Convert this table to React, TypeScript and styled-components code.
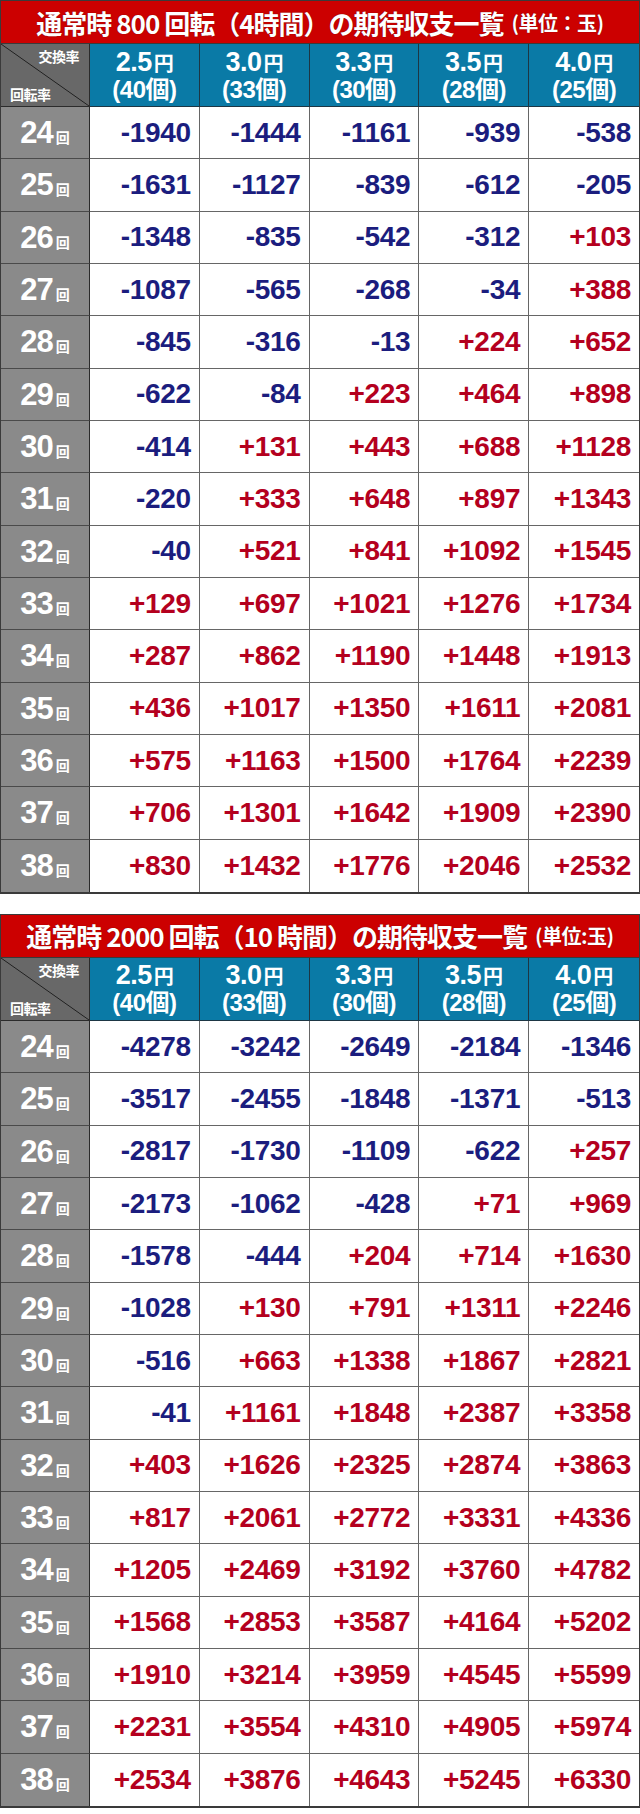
import styled, { createGlobalStyle } from 'styled-components';

const GlobalStyle = createGlobalStyle`
  html, body {
    margin: 0;
    padding: 0;
    background: #fff;
  }
  body {
    font-family: "Liberation Sans", "Noto Sans CJK JP", sans-serif;
  }
`;

type Table = {
  title: string;
  unit: string;
  values: number[][];
};

const rates = [
  { yen: '2.5', count: '40' },
  { yen: '3.0', count: '33' },
  { yen: '3.3', count: '30' },
  { yen: '3.5', count: '28' },
  { yen: '4.0', count: '25' },
];

const spins = [24, 25, 26, 27, 28, 29, 30, 31, 32, 33, 34, 35, 36, 37, 38];

const tables: Table[] = [
  {
    title: '通常時 800 回転（4時間）の期待収支一覧',
    unit: '(単位：玉)',
    values: [
      [-1940, -1444, -1161, -939, -538],
      [-1631, -1127, -839, -612, -205],
      [-1348, -835, -542, -312, 103],
      [-1087, -565, -268, -34, 388],
      [-845, -316, -13, 224, 652],
      [-622, -84, 223, 464, 898],
      [-414, 131, 443, 688, 1128],
      [-220, 333, 648, 897, 1343],
      [-40, 521, 841, 1092, 1545],
      [129, 697, 1021, 1276, 1734],
      [287, 862, 1190, 1448, 1913],
      [436, 1017, 1350, 1611, 2081],
      [575, 1163, 1500, 1764, 2239],
      [706, 1301, 1642, 1909, 2390],
      [830, 1432, 1776, 2046, 2532],
    ],
  },
  {
    title: '通常時 2000 回転（10 時間）の期待収支一覧',
    unit: '(単位:玉)',
    values: [
      [-4278, -3242, -2649, -2184, -1346],
      [-3517, -2455, -1848, -1371, -513],
      [-2817, -1730, -1109, -622, 257],
      [-2173, -1062, -428, 71, 969],
      [-1578, -444, 204, 714, 1630],
      [-1028, 130, 791, 1311, 2246],
      [-516, 663, 1338, 1867, 2821],
      [-41, 1161, 1848, 2387, 3358],
      [403, 1626, 2325, 2874, 3863],
      [817, 2061, 2772, 3331, 4336],
      [1205, 2469, 3192, 3760, 4782],
      [1568, 2853, 3587, 4164, 5202],
      [1910, 3214, 3959, 4545, 5599],
      [2231, 3554, 4310, 4905, 5974],
      [2534, 3876, 4643, 5245, 6330],
    ],
  },
];

const Page = styled.div`
  display: flex;
  flex-direction: column;
  gap: 20px;
  width: 640px;
`;

const Block = styled.section`
  border: 1px solid #3a3a3a;
  border-bottom-width: 2px;
  box-sizing: border-box;
`;

const Title = styled.h2`
  margin: 0;
  height: 42px;
  display: flex;
  align-items: center;
  justify-content: center;
  gap: 8px;
  background: #cc0000;
  color: #fff;
  font-family: "Noto Sans CJK JP", sans-serif;
  font-weight: 700;
  font-size: 26px;
  letter-spacing: -1px;
  text-shadow: 0 0 1px #5a0000;
  border-bottom: 1px solid #3a3a3a;
`;

const Unit = styled.span`
  font-size: 20px;
  letter-spacing: -0.5px;
`;

const Grid = styled.div`
  display: grid;
  grid-template-columns: 89px repeat(5, 1fr);
  grid-template-rows: 63px repeat(15, 52.33px);
`;

const Corner = styled.div`
  display: flex;
  flex-direction: column;
  justify-content: space-between;
  padding: 5px 10px 5px 9px;
  background: linear-gradient(
    to top right,
    #686868 calc(50% - 0.8px),
    #1f1f1f 50%,
    #686868 calc(50% + 0.8px)
  );
  color: #fff;
  font-family: "Noto Sans CJK JP", sans-serif;
  font-weight: 700;
  font-size: 14px;
  letter-spacing: -0.5px;
  border-right: 1px solid #2b2b2b;
  border-bottom: 1px solid #2b2b2b;
`;

const CornerText = styled.span<{ $end?: boolean }>`
  align-self: ${(p) => (p.$end ? 'flex-end' : 'flex-start')};
  line-height: 1;
`;

const RateCell = styled.div<{ $last?: boolean }>`
  display: flex;
  flex-direction: column;
  align-items: center;
  justify-content: center;
  background: #0a7aa6;
  color: #fff;
  font-weight: 700;
  border-right: ${(p) => (p.$last ? 'none' : '1px solid #1d3644')};
  border-bottom: 1px solid #1d3644;
`;

const Yen = styled.div`
  font-size: 27px;
  line-height: 28px;
  letter-spacing: -0.5px;
`;

const YenMark = styled.span`
  font-family: "Noto Sans CJK JP", sans-serif;
  font-size: 20px;
  margin-left: 2px;
`;

const Count = styled.div`
  font-family: "Liberation Sans", "Noto Sans CJK JP", sans-serif;
  font-size: 24px;
  line-height: 26px;
  letter-spacing: -0.5px;
`;

const SpinCell = styled.div<{ $last?: boolean }>`
  display: flex;
  align-items: baseline;
  justify-content: center;
  padding-top: 8px;
  box-sizing: border-box;
  background: #8a8a8a;
  color: #fff;
  font-weight: 700;
  font-size: 31px;
  line-height: 36px;
  letter-spacing: -1px;
  border-right: 1px solid #2b2b2b;
  border-bottom: ${(p) => (p.$last ? 'none' : '1px solid #4a4a4a')};
`;

const Kai = styled.span`
  font-family: "Noto Sans CJK JP", sans-serif;
  font-size: 14px;
  margin-left: 3px;
  letter-spacing: 0;
`;

const ValueCell = styled.div<{ $plus: boolean; $lastCol?: boolean; $lastRow?: boolean }>`
  display: flex;
  align-items: center;
  justify-content: flex-end;
  padding-right: 8px;
  background: #fff;
  color: ${(p) => (p.$plus ? '#b4001e' : '#1b1d7e')};
  font-weight: 700;
  font-size: 28px;
  letter-spacing: -0.3px;
  border-right: ${(p) => (p.$lastCol ? 'none' : '1px solid #666')};
  border-bottom: ${(p) => (p.$lastRow ? 'none' : '1px solid #666')};
`;

const fmt = (n: number) => (n > 0 ? `+${n}` : `${n}`);

const ExpectTable = ({ table }: { table: Table }) => (
  <Block>
    <Title>
      <span>{table.title}</span>
      <Unit>{table.unit}</Unit>
    </Title>
    <Grid>
      <Corner>
        <CornerText $end>交換率</CornerText>
        <CornerText>回転率</CornerText>
      </Corner>
      {rates.map((r, i) => (
        <RateCell key={r.yen} $last={i === rates.length - 1}>
          <Yen>
            {r.yen}
            <YenMark>円</YenMark>
          </Yen>
          <Count>({r.count}個)</Count>
        </RateCell>
      ))}
      {spins.map((s, ri) => {
        const lastRow = ri === spins.length - 1;
        return [
          <SpinCell key={`s${s}`} $last={lastRow}>
            {s}
            <Kai>回</Kai>
          </SpinCell>,
          ...table.values[ri].map((v, ci) => (
            <ValueCell
              key={`${s}-${ci}`}
              $plus={v > 0}
              $lastCol={ci === 4}
              $lastRow={lastRow}
            >
              {fmt(v)}
            </ValueCell>
          )),
        ];
      })}
    </Grid>
  </Block>
);

export default function App() {
  return (
    <>
      <GlobalStyle />
      <Page>
        {tables.map((t) => (
          <ExpectTable key={t.title} table={t} />
        ))}
      </Page>
    </>
  );
}
